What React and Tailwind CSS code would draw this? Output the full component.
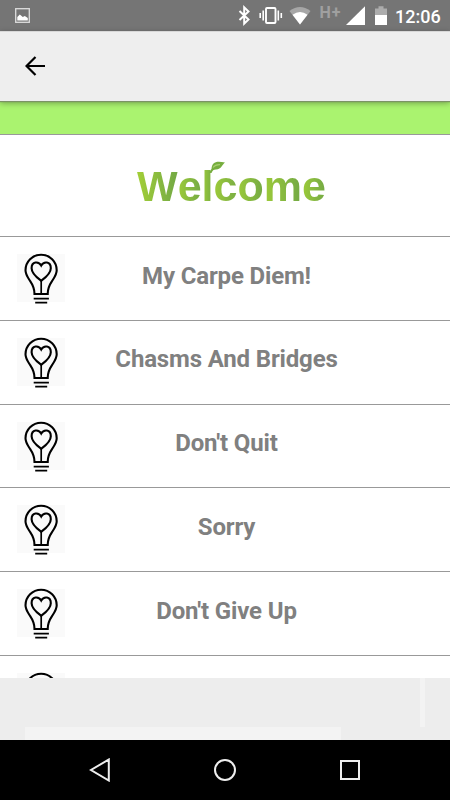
import React from 'react';

const poems = ['My Carpe Diem!', 'Chasms And Bridges', "Don't Quit", 'Sorry', "Don't Give Up", ''];

const Bulb = () => (
  <svg className="mt-[14px] ml-[17px] h-[54px] w-[48px] shrink-0" viewBox="0 0 48 54" fill="none" stroke="#000" strokeWidth="2.100">
    <rect x="0" y="3" width="48" height="48" fill="#fafafa" stroke="none" />
    <path d="M17.500 43c0-5.500-1.700-9-4.300-12.800C10.500 26 8.500 23.500 8.500 19.300A15.600 15.600 0 0 1 39.700 19.300C39.700 23.500 37.700 26 35 30.200C32.400 34 30.700 37.500 30.700 43Z" />
    <path d="M24.200 29.800C20.500 27 14.600 22.800 14.600 17.200C14.600 10.200 21.700 10 24.200 14.600C26.700 10 33.800 10.200 33.800 17.200C33.800 22.800 27.900 27 24.200 29.800Z" />
    <path d="M24.200 29V42" strokeWidth="1.700" />
    <path d="M16.700 47.600H31.900M18.200 51.600H30.200" strokeWidth="1.900" />
  </svg>
);

const StatusBar = () => (
  <div className="flex h-[31px] shrink-0 items-center bg-[#757575]">
    <svg className="ml-[15px] h-4 w-4" viewBox="0 0 16 16">
      <rect x="0.700" y="0.700" width="13.600" height="13.600" fill="none" stroke="#dedede" strokeWidth="1.300" />
      <path d="M2.300 12.500V9l2.500-2.500 3 2.500 2-1 3 2v2.500z" fill="#fff" />
    </svg>
    <svg className="ml-auto h-[31px] w-[165px]" viewBox="0 0 165 31" fill="none">
      {/* bluetooth */}
      <path d="M4.500 11l9 8.500-4.300 4.200V7.300l4.300 4.200L4.500 20" stroke="#fff" strokeWidth="2" />
      {/* vibración */}
      <rect x="31" y="8" width="9.500" height="15" rx="1" stroke="#fff" strokeWidth="1.900" />
      <path d="M28.200 10.500v10M25.200 13v5M43.300 10.500v10M46.300 13v5" stroke="#fff" strokeWidth="1.600" />
      {/* wifi */}
      <path d="M54.500 11Q65 2.800 75.500 11L65 24.500z" fill="#a6a6a6" />
      <path d="M57.500 14.800Q65 9 72.500 14.800L65 24.500z" fill="#fff" />
      {/* señal y batería */}
      <path d="M111 25L130 6.300V25z" fill="#fff" />
      <path d="M140 8.500h3.500v-2.300h5v2.300h3.500v6.500h-12z" fill="#acacac" />
      <path d="M140 15h12v10h-12z" fill="#fff" />
      <text x="84.500" y="17.500" fontSize="16" fontWeight="700" fill="#a0a0a0" textLength="21">H+</text>
    </svg>
    <span className="mr-[10px] -ml-[5px] w-[45px] pt-[2px] text-[18px] leading-none font-medium whitespace-nowrap text-white">12:06</span>
  </div>
);

const App = () => {
  return (
    <div className="flex h-[800px] w-[450px] flex-col overflow-hidden bg-white font-['Roboto',sans-serif]">
      <StatusBar />

      <header className="relative z-10 flex h-[70px] shrink-0 items-center border-t border-[#d8d8d8] bg-[#eeeeee] pb-px pl-[25px] shadow-[0_1px_1px_#7b9365,0_2px_6px_rgba(0,0,0,0.35)]">
        <svg className="h-5 w-[21px]" viewBox="0 0 21 20" fill="none" stroke="#000" strokeWidth="2.200">
          <path d="M20 10H2M10.500 1L1.500 10l9 9" />
        </svg>
      </header>

      <main className="flex min-h-0 flex-1 flex-col overflow-hidden">
        <div className="h-[34px] shrink-0 border-b border-[#999999] bg-[#aaf36f]" />

        <div className="flex h-[102px] shrink-0 justify-center border-b border-[#999999] pl-[13px]">
          <div className="relative mt-[30px] flex h-[43px] font-['Liberation_Sans',Arial,sans-serif] text-[43px] leading-[43px] font-bold text-transparent">
            <span className="bg-linear-to-r from-[#a3cf36] to-[#72a844] bg-clip-text">W</span>
            <span className="bg-linear-to-r from-[#9dcb38] to-[#72a844] bg-clip-text">e</span>
            <span className="bg-linear-to-r from-[#9dcb38] to-[#72a844] bg-clip-text">l</span>
            <span className="bg-linear-to-r from-[#9dcb38] to-[#79ad43] bg-clip-text">c</span>
            <span className="bg-linear-to-r from-[#9dcb38] to-[#72a844] bg-clip-text">o</span>
            <span className="bg-linear-to-r from-[#9dcb38] to-[#72a844] bg-clip-text">m</span>
            <span className="bg-linear-to-r from-[#9dcb38] to-[#72a844] bg-clip-text">e</span>
            <svg className="absolute -top-[4px] left-[71px] h-[14px] w-[18px]" viewBox="0 0 18 14">
              <path d="M3.500 8C4 1 8 -.5 17 1.500C14.500 3 13.500 8.500 8 8.500C5.500 8.500 4.500 9.500 3.500 12H1.500C2 10 2.500 9 3.500 8z" fill="#76ad3e" />
              <path d="M5 6.500C7 4 9 3.500 12 3.700" fill="none" stroke="#a9d070" strokeWidth="1.200" />
            </svg>
          </div>
        </div>

        <div className="min-h-0 flex-1 overflow-hidden">
          {poems.map((title, i) => (
            <div key={i} className="flex h-[83.75px] border-b border-[#999999]">
              <Bulb />
              <h2 className="flex-1 pt-[23.700px] pr-[62px] text-center text-[24px] leading-[30px] font-bold tracking-[-0.15px] text-[#808080]">{title}</h2>
            </div>
          ))}
        </div>
      </main>

      {/* Espacio del anuncio */}
      <footer className="flex h-[62px] shrink-0 flex-col bg-[#ededed]">
        <div className="ml-[420px] h-[49px] w-[5px] bg-[#f3f3f3]" />
        <div className="ml-[25px] h-[13px] w-[316px] bg-[#f3f3f3]" />
      </footer>

      <nav className="flex h-[60px] shrink-0 items-center justify-between bg-black px-[88px]">
        <svg className="h-6 w-6" viewBox="0 0 24 24" fill="none" stroke="#eee" strokeWidth="2">
          <path d="M20.800 1.500V22.500L3 12z" />
        </svg>
        <svg className="h-6 w-6" viewBox="0 0 24 24" fill="none" stroke="#eee" strokeWidth="2">
          <circle cx="12" cy="12" r="10" />
        </svg>
        <svg className="h-6 w-6" viewBox="0 0 24 24" fill="none" stroke="#eee" strokeWidth="2">
          <rect x="3" y="3" width="18" height="18" />
        </svg>
      </nav>
    </div>
  );
};

export default App;
